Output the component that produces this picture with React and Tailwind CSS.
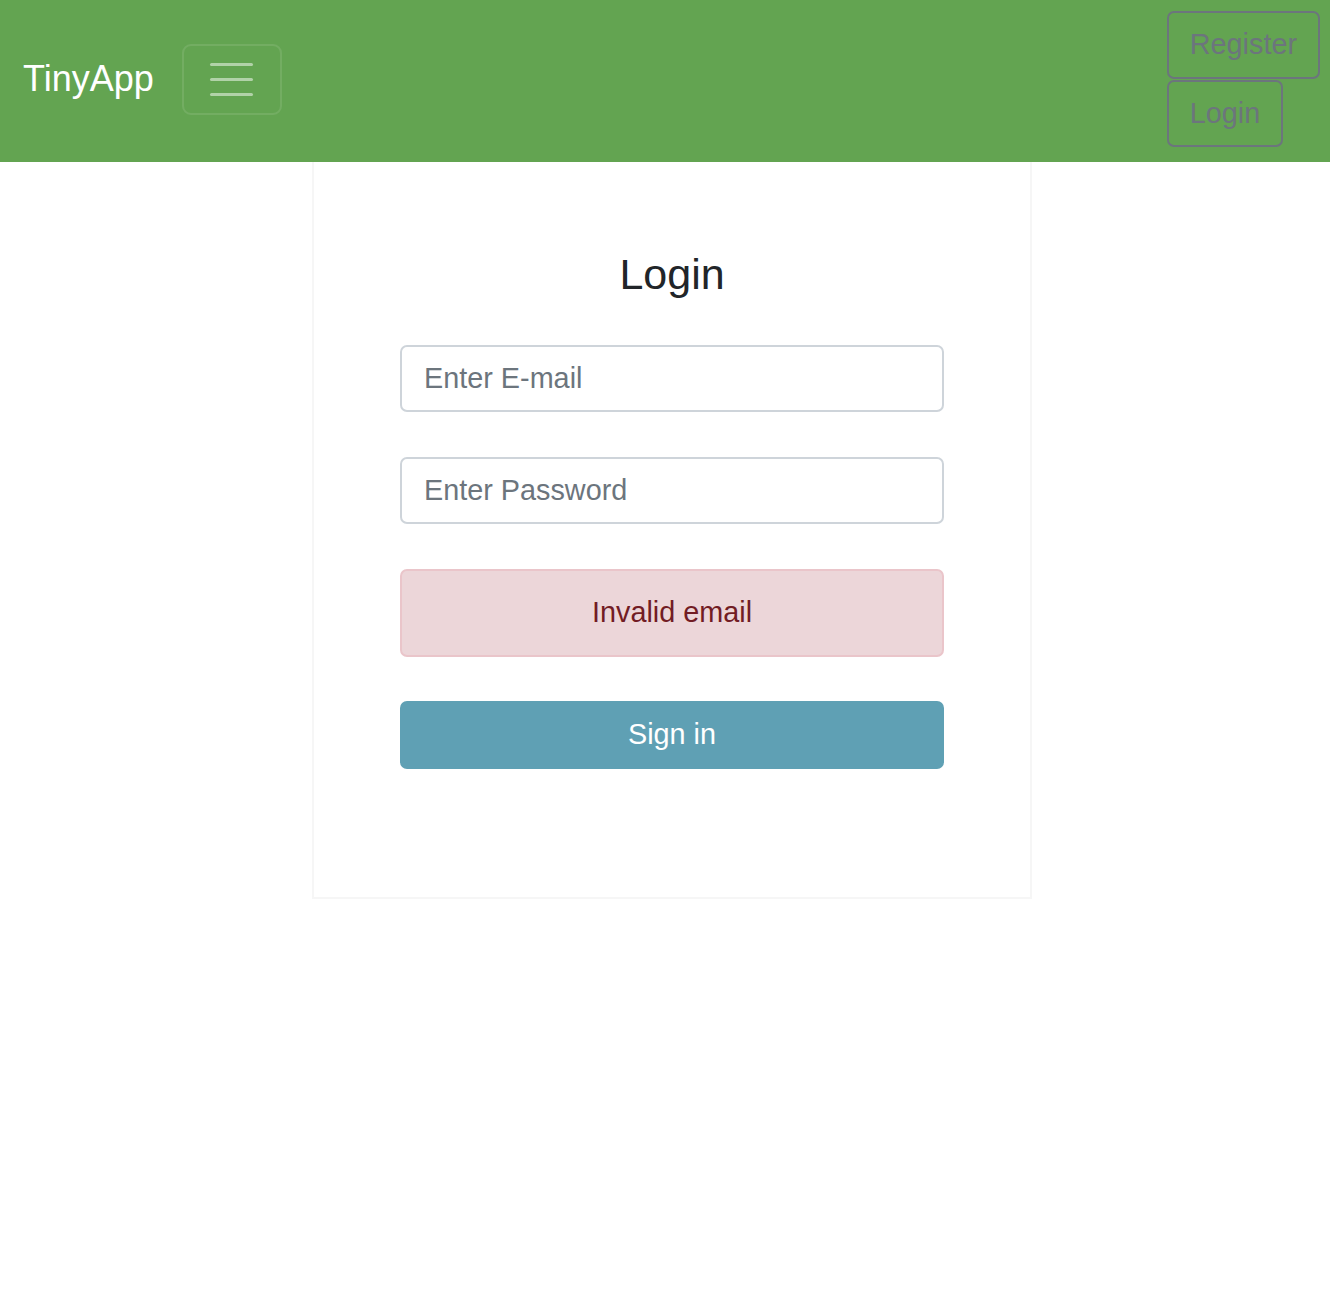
export default function App() {
  return (
    <div className="min-h-[1300px] bg-white" style={{ fontFamily: '"Liberation Sans", Arial, sans-serif' }}>
      <nav className="h-[162px] bg-[#63a451] flex items-center pl-[23px] pr-[10px]">
        <span className="text-[36px] leading-none text-white mt-[-4px]">TinyApp</span>
        <button className="ml-[28px] w-[100px] h-[71px] mt-[-3px] rounded-[9px] border-2 border-white/10 flex flex-col items-center justify-center gap-[12px]">
          <span className="block w-[43px] h-[3px] rounded-full bg-white/50"></span>
          <span className="block w-[43px] h-[3px] rounded-full bg-white/50"></span>
          <span className="block w-[43px] h-[3px] rounded-full bg-white/50"></span>
        </button>
        <div className="ml-auto flex flex-col items-start gap-[1px] mt-[-5px]">
          <button className="h-[68px] px-[21px] rounded-[7px] border-2 border-[#6c757d] text-[#6c757d] text-[28.8px] leading-none">Register</button>
          <button className="h-[67px] px-[21px] rounded-[7px] border-2 border-[#6c757d] text-[#6c757d] text-[28.8px] leading-none">Login</button>
        </div>
      </nav>
      <div className="flex justify-center pl-[14px]">
        <div className="w-[720px] border-2 border-t-0 border-[#f6f6f6] px-[86px] pt-[87px] pb-[128px] flex flex-col">
          <h4 className="text-[43px] leading-[50px] text-[#212529] text-center">Login</h4>
          <input
            className="mt-[46px] h-[67px] w-full rounded-[7px] border-2 border-[#ced4da] px-[22px] text-[28.8px] text-[#495057] placeholder:text-[#6c757d] outline-none"
            placeholder="Enter E-mail"
          />
          <input
            type="password"
            className="mt-[45px] h-[67px] w-full rounded-[7px] border-2 border-[#ced4da] px-[22px] text-[28.8px] text-[#495057] placeholder:text-[#6c757d] outline-none"
            placeholder="Enter Password"
          />
          <div className="mt-[45px] h-[88px] rounded-[7px] border-2 border-[#eac5ca] bg-[#ecd6d9] text-[#721c24] text-[28.8px] flex items-center justify-center">
            Invalid email
          </div>
          <button className="mt-[44px] h-[68px] w-full rounded-[7px] bg-[#5fa0b4] text-white text-[28.8px]">Sign in</button>
        </div>
      </div>
    </div>
  );
}
